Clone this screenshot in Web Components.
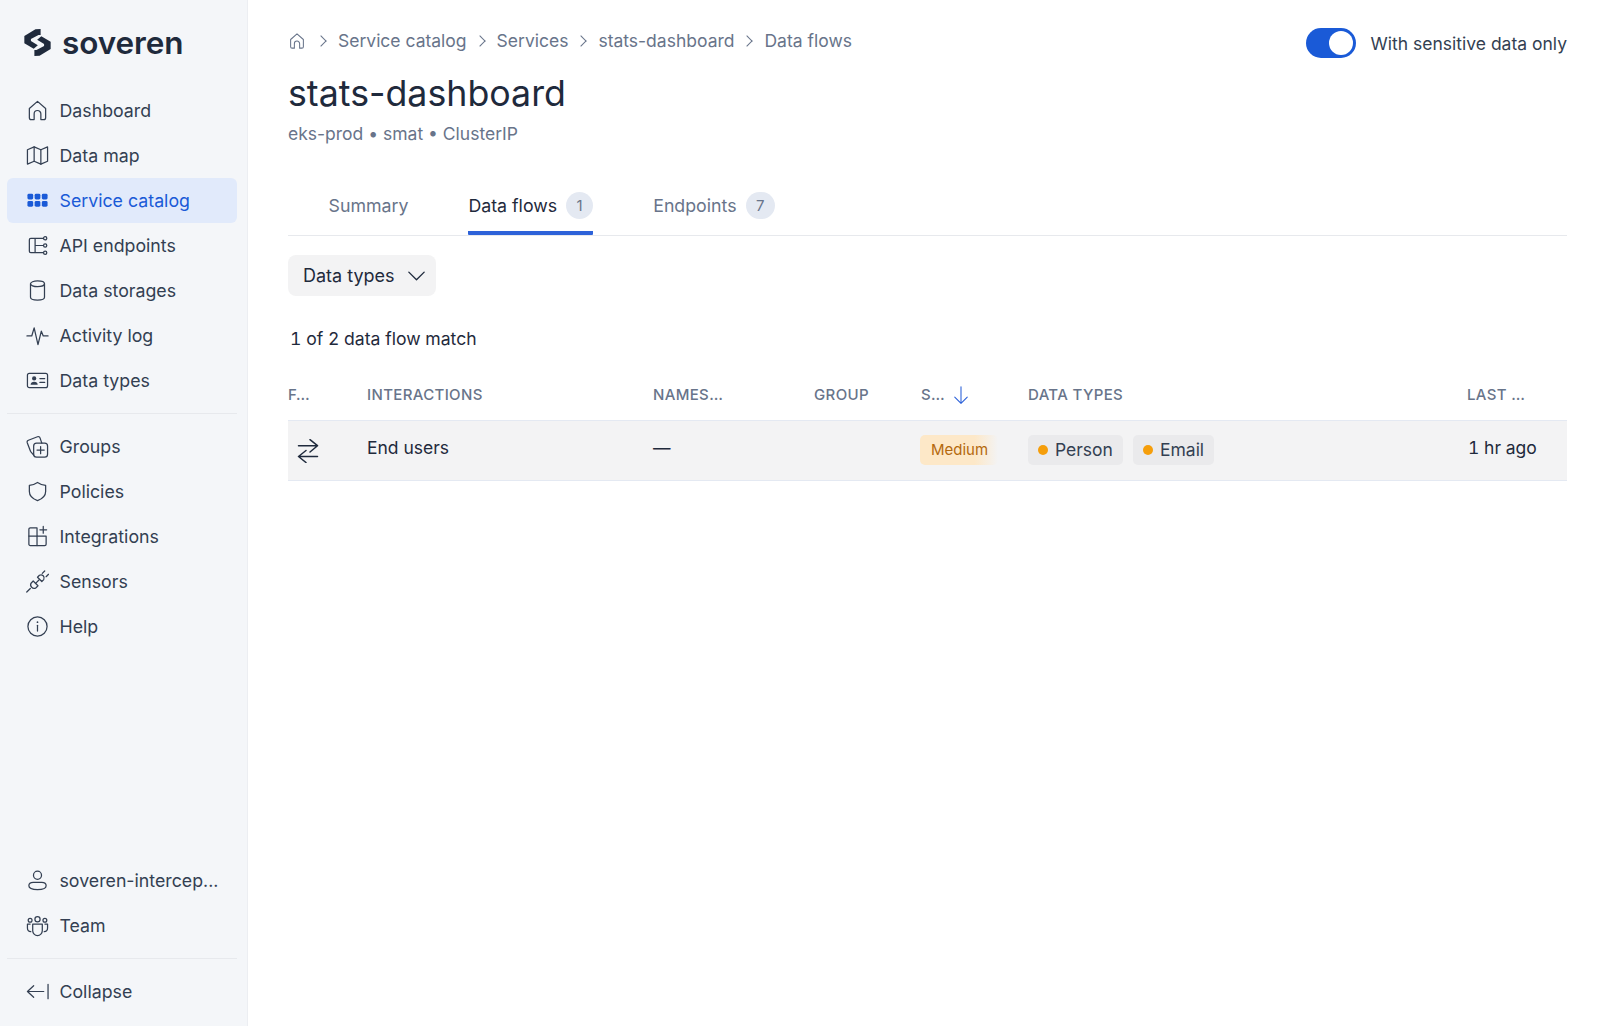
<!doctype html>
<html lang="en">
<head>
<meta charset="utf-8">
<title>stats-dashboard - Soveren</title>
<style>
  html, body { margin: 0; height: 100%; }
  body { font-family: Inter, "Liberation Sans", sans-serif; color: #1f2a3c; background: #fff; }
</style>
</head>
<body>
<app-shell>
  <side-bar slot="sidebar">
    <nav-item icon="home">Dashboard</nav-item>
    <nav-item icon="map">Data map</nav-item>
    <nav-item icon="grid" active>Service catalog</nav-item>
    <nav-item icon="api">API endpoints</nav-item>
    <nav-item icon="db">Data storages</nav-item>
    <nav-item icon="pulse">Activity log</nav-item>
    <nav-item icon="card">Data types</nav-item>
    <nav-item icon="groups" slot="second">Groups</nav-item>
    <nav-item icon="shield" slot="second">Policies</nav-item>
    <nav-item icon="apps" slot="second">Integrations</nav-item>
    <nav-item icon="plug" slot="second">Sensors</nav-item>
    <nav-item icon="info" slot="second">Help</nav-item>
    <nav-item icon="user" slot="bottom">soveren-intercep...</nav-item>
    <nav-item icon="team" slot="bottom">Team</nav-item>
    <nav-item icon="collapse" slot="footer">Collapse</nav-item>
  </side-bar>
  <service-page>
    <bread-crumbs slot="crumbs">
      <span>Service catalog</span>
      <span>Services</span>
      <span>stats-dashboard</span>
      <span>Data flows</span>
    </bread-crumbs>
    <toggle-switch slot="toggle" checked>With sensitive data only</toggle-switch>
    <span slot="title">stats-dashboard</span>
    <span slot="meta">eks-prod • smat • ClusterIP</span>
    <tab-bar slot="tabs">
      <tab-item>Summary</tab-item>
      <tab-item active count="1">Data flows</tab-item>
      <tab-item count="7">Endpoints</tab-item>
    </tab-bar>
    <filter-button slot="filters">Data types</filter-button>
    <span slot="summary">1 of 2 data flow match</span>
    <flows-table slot="table"></flows-table>
  </service-page>
</app-shell>

<script>
// Stroke icons, all on a 24 box
const ICONS = {
  home: '<path d="M3.500 10 12 2.500l8.500 7.500v9.500a2 2 0 0 1-2 2h-3V15.500a3.500 3.500 0 0 0-7 0v6h-3a2 2 0 0 1-2-2z"/>',
  map: '<path d="M1.500 6 8.500 3l7 3 7-3v15l-7 3-7-3-7 3z"/><path d="M8.500 3v15M15.500 6v15"/>',
  grid: '<g fill="currentColor" stroke="none"><rect x="1.500" y="5" width="6" height="6" rx="1.500"/><rect x="9" y="5" width="6" height="6" rx="1.500"/><rect x="16.500" y="5" width="6" height="6" rx="1.500"/><rect x="1.500" y="12.500" width="6" height="6" rx="1.500"/><rect x="9" y="12.500" width="6" height="6" rx="1.500"/><rect x="16.500" y="12.500" width="6" height="6" rx="1.500"/></g>',
  api: '<path d="M18 4.500H5a1.500 1.500 0 0 0-1.500 1.500v12A1.500 1.500 0 0 0 5 19.500h13M9.500 4.500v15M9.500 12H18"/><circle cx="20" cy="4.500" r="1.700"/><circle cx="20" cy="12" r="1.700"/><circle cx="20" cy="19.500" r="1.700"/>',
  db: '<ellipse cx="12" cy="5" rx="7.300" ry="3"/><path d="M4.700 5v14c0 1.700 3.300 3 7.300 3s7.300-1.300 7.300-3V5"/>',
  pulse: '<path d="M1 12.500h5L8.500 4l4 17.500L16 7.500l2 5h5"/>',
  card: '<rect x="1.500" y="4.500" width="21" height="15" rx="2"/><path d="M14.500 10h5M14.500 14h5"/><circle cx="8.500" cy="9.800" r="2.200" fill="currentColor" stroke="none"/><path d="M4.800 16.500c0-2.200 1.600-3.300 3.700-3.300s3.700 1.100 3.700 3.300z" fill="currentColor" stroke="none"/>',
  groups: '<path d="M8 21 4.700 17 1.300 8a2 2 0 0 1 1.200-2.500L12 1.800a2 2 0 0 1 2.600 1.200l1.900 5.500"/><rect x="8" y="8.500" width="14.500" height="14.500" rx="3"/><path d="M15.250 12v7.500M11.500 15.750H19"/>',
  shield: '<path d="M12 2.500c3 2 5.500 2.800 8.500 3.200V12c0 4.500-3 7.500-8.500 9.500C6.500 19.500 3.500 16.500 3.500 12V5.700C6.500 5.300 9 4.500 12 2.500z"/>',
  apps: '<path d="M4.500 3H11.500V11.500H21V20a1.500 1.500 0 0 1-1.500 1.500h-15A1.500 1.500 0 0 1 3 20V4.500A1.500 1.500 0 0 1 4.500 3z"/><path d="M3 11.500h8.500M11.500 11.500v10M18 1.500v7M14.500 5h7"/>',
  plug: '<path d="M.8 23 4.500 19.300"/><path d="M7.500 11.500 12.500 16.500 10.500 18.500a3.600 3.600 0 0 1-5-5z"/><path d="M10 14 13.500 10.500"/><path d="M12 7.500 16.500 12 18.500 10a3.300 3.300 0 0 0-4.500-4.500z"/><path d="M17 3.500 19.500 1M21 7 23.500 4.500"/>',
  info: '<circle cx="12" cy="12" r="10"/><path d="M12 10.800v6"/><circle cx="12" cy="7.500" r=".9" fill="currentColor" stroke="none"/>',
  user: '<circle cx="12" cy="6.500" r="4.200"/><path d="M3 17.500c0-2.400 2.200-3.500 4.500-3.500h9c2.300 0 4.500 1.100 4.500 3.500 0 2.500-3.500 4-9 4s-9-1.500-9-4z"/>',
  team: '<circle cx="12" cy="5.500" r="2.700"/><circle cx="4.300" cy="6.500" r="2"/><circle cx="19.700" cy="6.500" r="2"/><path d="M7 10.500h10v7a5 5 0 0 1-10 0z"/><path d="M4.300 10.500H1.500v4.200a3.800 3.800 0 0 0 3.500 3.800M19.700 10.500h2.800v4.200a3.800 3.800 0 0 1-3.500 3.800"/>',
  collapse: '<path d="M18.500 12H1.500M8 6l-6.500 6L8 18M23 4.500v15"/>',
  chevronDown: '<path d="m4 8.500 8 8 8-8"/>',
  swap: '<path d="M2.500 6.700h19M14 .7 21.500 6.700 14 13M21.500 17.500h-19M10 11.500l-7.500 6 7.500 6"/>',
  arrowDown: '<path d="M12 2v20M4.500 14.500 12 22l7.500-7.500"/>'
};

function icon(name, size, width = 1.5) {
  return `<svg xmlns="http://www.w3.org/2000/svg" width="${size}" height="${size}" viewBox="0 0 24 24" fill="none" stroke="currentColor" stroke-width="${width}" stroke-linecap="round" stroke-linejoin="round" aria-hidden="true">${ICONS[name]}</svg>`;
}

// Small helper so every element only has to hand over its markup
class ShadowElement extends HTMLElement {
  constructor() {
    super();
    this.attachShadow({ mode: "open" });
  }
  connectedCallback() {
    this.shadowRoot.innerHTML = this.render();
  }
}

class AppShell extends ShadowElement {
  render() {
    return `
      <style>
        :host { display: flex; height: 100vh; min-height: 1026px; }
        ::slotted(side-bar) { flex: 0 0 248px; }
        main { flex: 1; min-width: 0; }
      </style>
      <slot name="sidebar"></slot>
      <main><slot></slot></main>
    `;
  }
}

class SideBar extends ShadowElement {
  render() {
    return `
      <style>
        :host {
          display: flex;
          flex-direction: column;
          box-sizing: border-box;
          background: #f4f6f9;
          border-right: 1px solid #eceef2;
          padding: 0 10px 12px 7px;
        }
        .logo { height: 88px; display: flex; align-items: center; gap: 11px; padding: 0 0 3px 17px; box-sizing: border-box; color: #1f2a3c; }
        .logo svg { flex: none; }
        .word { font-size: 31.500px; font-weight: 600; letter-spacing: -0.100px; line-height: 1; }
        .group { display: flex; flex-direction: column; }
        hr { border: 0; border-top: 1px solid #e7e9ed; margin: 10px 0; width: 100%; }
        .spacer { flex: 1; }
      </style>
      <div class="logo">
        <svg width="27" height="27" viewBox="0 0 78 78" fill="currentColor" aria-hidden="true">
          <path d="M48 0V17H42L20 29V35L40 47 28 57 1 41V20L33 1z"/>
          <path d="M30 78V61H36L58 49V43L38 31 50 21 77 37V58L45 77z"/>
        </svg>
        <span class="word">soveren</span>
      </div>
      <div class="group"><slot></slot></div>
      <hr>
      <div class="group"><slot name="second"></slot></div>
      <div class="spacer"></div>
      <div class="group"><slot name="bottom"></slot></div>
      <hr>
      <div class="group"><slot name="footer"></slot></div>
    `;
  }
}

class NavItem extends ShadowElement {
  render() {
    const active = this.hasAttribute("active");
    return `
      <style>
        :host {
          display: flex;
          align-items: center;
          gap: 10.500px;
          height: 45px;
          padding-left: 19px;
          border-radius: 6px;
          font-size: 17.750px;
          white-space: nowrap;
          color: ${active ? "#1a5ad7" : "#333f52"};
          background: ${active ? "#e1eafb" : "transparent"};
        }
        svg { flex: none; }
      </style>
      ${icon(this.getAttribute("icon"), 23, 1.3)}
      <slot></slot>
    `;
  }
}

class BreadCrumbs extends ShadowElement {
  render() {
    return `
      <style>
        :host { display: flex; align-items: center; color: #68748a; font-size: 17.500px; }
        .home { display: flex; margin-right: 2px; }
        .row { display: flex; align-items: center; }
        ::slotted(span) { display: inline-flex; align-items: center; }
        ::slotted(span)::before { content: ""; width: 7px; height: 7px; border: solid #68748a; border-width: 1.200px 1.200px 0 0; transform: rotate(45deg); margin: 0 13px 0 9px; }
      </style>
      <span class="home">${icon("home", 18, 1.400)}</span>
      <div class="row"><slot></slot></div>
    `;
  }
}

class ToggleSwitch extends ShadowElement {
  render() {
    return `
      <style>
        :host { display: flex; align-items: center; gap: 15px; font-size: 17.500px; color: #333f52; white-space: nowrap; }
        .track { width: 50px; height: 30px; border-radius: 15px; background: #1a5ad7; box-sizing: border-box; padding: 3px; display: flex; justify-content: flex-end; }
        .thumb { width: 24px; height: 24px; border-radius: 50%; background: #fff; }
      </style>
      <span class="track"><span class="thumb"></span></span>
      <slot></slot>
    `;
  }
}

class TabBar extends ShadowElement {
  render() {
    return `
      <style>
        :host { display: flex; gap: 60px; height: 60px; padding-left: 40.500px; border-bottom: 1px solid #e7e9ed; box-sizing: border-box; }
      </style>
      <slot></slot>
    `;
  }
}

class TabItem extends ShadowElement {
  render() {
    const active = this.hasAttribute("active");
    const count = this.getAttribute("count");
    return `
      <style>
        :host {
          display: flex;
          align-items: center;
          gap: 9px;
          height: 59px;
          box-sizing: border-box;
          padding-top: 3px;
          font-size: 17.750px;
          color: ${active ? "#1f2a3c" : "#68748a"};
          border-bottom: 4px solid ${active ? "#2d62d9" : "transparent"};
          border-radius: 0 0 1px 1px;
          white-space: nowrap;
        }
        .count { box-sizing: border-box; padding: 0 10.500px; height: 27px; border-radius: 14px; background: #e4e9f2; color: #68748a; display: flex; align-items: center; justify-content: center; font-size: 15px; }
      </style>
      <slot></slot>
      ${count ? `<span class="count">${count}</span>` : ""}
    `;
  }
}

class FilterButton extends ShadowElement {
  render() {
    return `
      <style>
        :host { display: inline-flex; align-items: center; gap: 10px; height: 41px; padding: 0 8px 0 15px; background: #f3f3f4; border-radius: 8px; font-size: 18px; color: #1f2a3c; white-space: nowrap; }
      </style>
      <slot></slot>
      ${icon("chevronDown", 23, 1.400)}
    `;
  }
}

class StatusChip extends ShadowElement {
  render() {
    return `
      <style>
        :host { display: inline-flex; align-items: center; gap: 7px; height: 30px; padding: 0 10px; border-radius: 5px; background: #eaeaec; color: #333f52; font-size: 17.500px; white-space: nowrap; }
        .dot { width: 10px; height: 10px; border-radius: 50%; background: #f59e0b; }
      </style>
      <span class="dot"></span><slot></slot>
    `;
  }
}

class FlowsTable extends ShadowElement {
  render() {
    return `
      <style>
        :host { display: block; }
        .row {
          display: grid;
          grid-template-columns: 79px 286px 161px 107px 107px 439px 100px;
          align-items: center;
        }
        .head { height: 51px; box-sizing: border-box; font-size: 15px; font-weight: 500; letter-spacing: 0.350px; color: #68748a; white-space: nowrap; }
        .body { height: 61px; box-sizing: border-box; background: #f3f3f4; border-top: 1px solid #e4e9f2; border-bottom: 1px solid #e4e9f2; font-size: 17.500px; color: #1f2a3c; }
        .sort { display: flex; align-items: center; gap: 6px; }
        .sort svg { color: #2d62d9; }
        .swap { display: flex; padding-left: 7.500px; }
        .medium {
          display: inline-flex; align-items: center; height: 30px; width: 78px; box-sizing: border-box; padding-left: 11px; margin: -2px 0 0 -1px;
          border-radius: 5px; font-size: 15px; color: #b4690e; white-space: nowrap; overflow: hidden;
          background: linear-gradient(90deg, #fde8c8 70%, #f3f3f4 100%);
        }
        .chips { display: flex; gap: 10px; margin-top: -2px; }
        .last { padding-left: 1px; font-variant-numeric: tabular-nums; }
        .dash { color: #1f2a3c; }
        .lift { margin-top: -7px; }
      </style>
      <div class="row head">
        <span>F…</span>
        <span>INTERACTIONS</span>
        <span>NAMES…</span>
        <span>GROUP</span>
        <span class="sort">S… ${icon("arrowDown", 20, 1.300)}</span>
        <span>DATA TYPES</span>
        <span>LAST …</span>
      </div>
      <div class="row body">
        <span class="swap">${icon("swap", 24, 1.500)}</span>
        <span class="lift">End users</span>
        <span class="lift dash">—</span>
        <span></span>
        <span style="display:flex"><span class="medium">Medium</span></span>
        <span class="chips"><status-chip>Person</status-chip><status-chip>Email</status-chip></span>
        <span class="last lift">1 hr ago</span>
      </div>
    `;
  }
}

class ServicePage extends ShadowElement {
  render() {
    return `
      <style>
        :host { display: block; padding: 0 35px 0 40px; }
        .top { display: flex; justify-content: space-between; align-items: flex-start; }
        .crumbs { padding-top: 30px; height: 52px; box-sizing: border-box; }
        .toggle { padding-top: 28px; }
        h1 { margin: 9px 0 0; font-size: 35.750px; line-height: 52px; font-weight: 400; color: #1f2a3c; }
        .meta { font-size: 17.500px; line-height: 26px; color: #68748a; margin-top: 2px; }
        .tabs { margin-top: 29px; }
        .filters { margin-top: 19px; height: 41px; }
        .summary { margin-top: 30px; padding-left: 2px; font-size: 17.600px; line-height: 26px; color: #1f2a3c; font-variant-numeric: tabular-nums; }
        .table { margin-top: 17px; }
      </style>
      <div class="top">
        <div class="crumbs"><slot name="crumbs"></slot></div>
        <div class="toggle"><slot name="toggle"></slot></div>
      </div>
      <h1><slot name="title"></slot></h1>
      <div class="meta"><slot name="meta"></slot></div>
      <div class="tabs"><slot name="tabs"></slot></div>
      <div class="filters"><slot name="filters"></slot></div>
      <div class="summary"><slot name="summary"></slot></div>
      <div class="table"><slot name="table"></slot></div>
    `;
  }
}

customElements.define("app-shell", AppShell);
customElements.define("side-bar", SideBar);
customElements.define("nav-item", NavItem);
customElements.define("bread-crumbs", BreadCrumbs);
customElements.define("toggle-switch", ToggleSwitch);
customElements.define("tab-bar", TabBar);
customElements.define("tab-item", TabItem);
customElements.define("filter-button", FilterButton);
customElements.define("status-chip", StatusChip);
customElements.define("flows-table", FlowsTable);
customElements.define("service-page", ServicePage);
</script>
</body>
</html>
